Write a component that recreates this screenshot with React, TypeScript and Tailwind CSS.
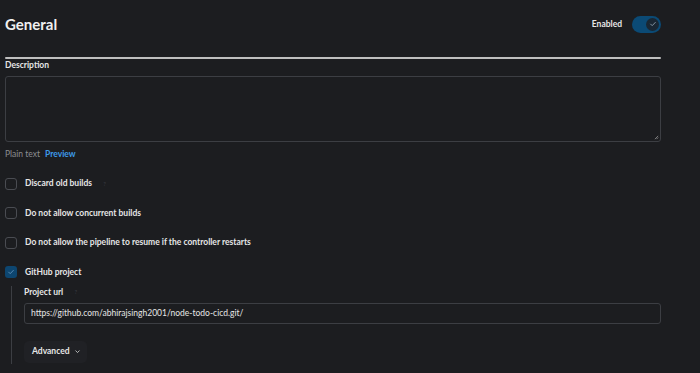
import React from "react";

function Help({ className = "" }: { className?: string }) {
  return (
    <span
      className={`inline-flex items-center justify-center w-[9px] h-[9px] rounded-full text-[6px] text-[#3a3c42] leading-none ${className}`}
    >
      ?
    </span>
  );
}

function Check({ color }: { color: string }) {
  return (
    <svg viewBox="0 0 12 12" className="w-[8px] h-[8px]" fill="none">
      <path d="M2.5 6.2l2.3 2.3 4.7-4.9" stroke={color} strokeWidth="1.4" strokeLinecap="round" strokeLinejoin="round" />
    </svg>
  );
}

function CheckRow({ label, checked, help }: { label: string; checked?: boolean; help?: boolean }) {
  return (
    <div className="flex items-center h-[13px]">
      {checked ? (
        <div className="w-[12px] h-[12px] rounded-[3px] bg-[#0d4670] flex items-center justify-center">
          <Check color="#5d8fb8" />
        </div>
      ) : (
        <div className="w-[12px] h-[12px] rounded-[3px] border border-[#4a4c52]" />
      )}
      <span className="ml-[8px] text-[8.5px] font-bold text-[#e6e6e6]">{label}</span>
      {help && <Help className="ml-[8px]" />}
    </div>
  );
}

export default function App() {
  return (
    <div
      className="w-[700px] h-[373px] bg-[#1c1d20] overflow-hidden"
      style={{ fontFamily: 'Lato, "Open Sans", sans-serif' }}
    >
      <div className="w-[661px] pl-[5px]">
        <div className="h-[48px] flex items-center justify-between">
          <h1 className="text-[15px] font-bold text-[#f0f0f0]">General</h1>
          <div className="flex items-center">
            <span className="text-[8.5px] font-bold text-[#e6e6e6]">Enabled</span>
            <div className="ml-[10px] w-[29px] h-[17px] rounded-full bg-[#0b4a75] flex items-center justify-end pr-[2px]">
              <div className="w-[13px] h-[13px] rounded-full bg-[#1a2733] flex items-center justify-center">
                <Check color="#8a9aa8" />
              </div>
            </div>
          </div>
        </div>
        <div className="mt-[9px] h-[2px] bg-[#bfbfbf] rounded-full" />
        <div className="text-[8.5px] font-bold text-[#e6e6e6] leading-[12px]">Description</div>
        <div className="mt-[5px] h-[66px] rounded-[3px] border border-[#3c3e43] relative">
          <svg viewBox="0 0 6 6" className="absolute right-[1px] bottom-[1px] w-[5px] h-[5px]">
            <path d="M5 1L1 5M5 3L3 5" stroke="#9a9a9a" strokeWidth="0.9" />
          </svg>
        </div>
        <div className="mt-[6px] leading-[12px] text-[8.5px] flex">
          <span className="text-[#8d8e91]">Plain text</span>
          <span className="ml-[5px] text-[#3d9ae8] font-bold">Preview</span>
        </div>
        <div className="mt-[17px] flex flex-col gap-[16.5px]">
          <CheckRow label="Discard old builds" help />
          <CheckRow label="Do not allow concurrent builds" />
          <CheckRow label="Do not allow the pipeline to resume if the controller restarts" />
          <CheckRow label="GitHub project" checked />
        </div>
        <div className="mt-[7px] ml-[6px] border-l border-[#3c3e43] pl-[12px] pb-[1px]">
          <div className="flex items-center leading-[12px]">
            <span className="text-[8.5px] font-bold text-[#e6e6e6]">Project url</span>
            <Help className="ml-[8px]" />
          </div>
          <div className="mt-[5px] h-[21px] rounded-[3px] border border-[#3c3e43] flex items-center px-[6px] text-[8.5px] text-[#e6e6e6]">
            https://github.com/abhirajsingh2001/node-todo-cicd.git/
          </div>
          <div className="mt-[17px] w-[63px] h-[22px] rounded-[5px] bg-[#202125] flex items-center pl-[8px] text-[8.5px] font-bold text-[#e6e6e6]">
            Advanced
            <svg viewBox="0 0 10 10" className="ml-[4px] w-[7px] h-[7px]" fill="none">
              <path d="M2.5 4l2.5 2.5L7.5 4" stroke="#d0d0d0" strokeWidth="1.2" strokeLinecap="round" strokeLinejoin="round" />
            </svg>
          </div>
        </div>
      </div>
    </div>
  );
}
